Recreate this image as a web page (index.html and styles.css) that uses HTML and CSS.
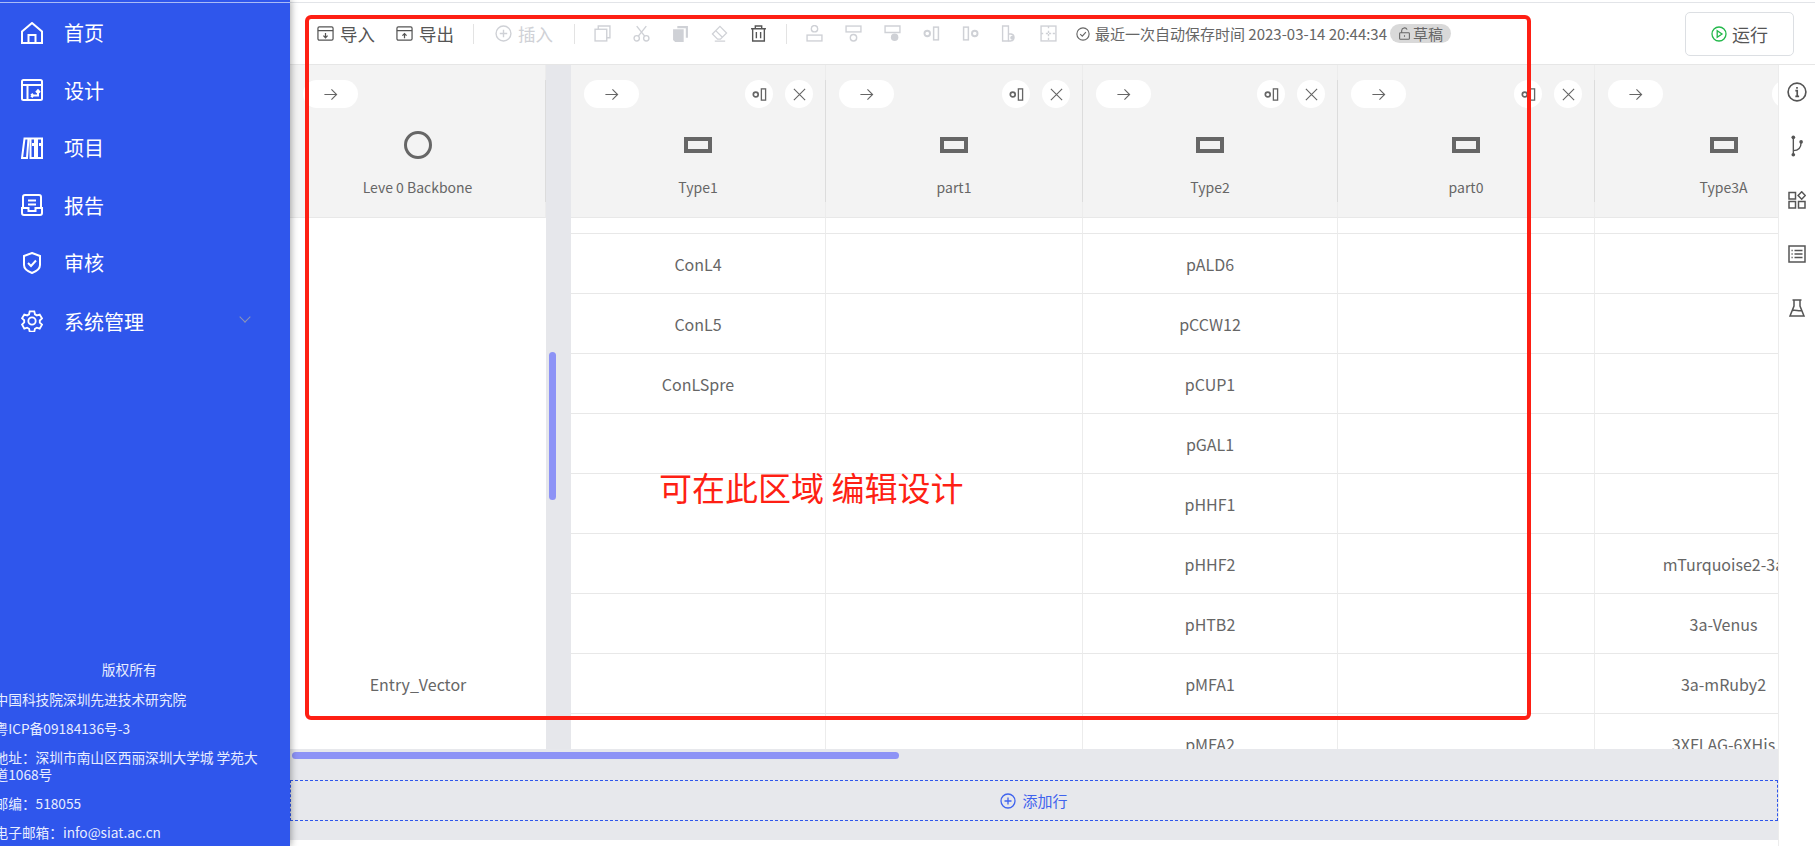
FILE: index.html
```html
<!DOCTYPE html>
<html>
  <head>
    <meta charset="utf-8">
    <title>设计</title>
    <link rel="stylesheet" href="styles.css">
  </head>
  <body>
    <!-- 图标 -->
    <svg class="sprite">
      <symbol id="i-arrow" viewBox="0 0 16 16"><path d="M1.5 8h13M9 2.5 14.5 8 9 13.5"/></symbol>
      <symbol id="i-close" viewBox="0 0 16 16"><path d="M2 2l12 12M14 2 2 14"/></symbol>
      <symbol id="i-ring-left" viewBox="0 0 16 16"><circle cx="4" cy="8" r="2.6" stroke-width="1.8"/><rect x="10" y="2" width="4.5" height="12" stroke-width="1.4"/></symbol>
      <symbol id="i-ring-right" viewBox="0 0 16 16"><circle cx="12" cy="8" r="2.6" stroke-width="1.8"/><rect x="1.5" y="2" width="4.5" height="12" stroke-width="1.4"/></symbol>
      <symbol id="i-import" viewBox="0 0 18 18"><rect x="1" y="2" width="16" height="14" rx="1.5"/><path d="M1 6h16M9 8.5v5M6.8 11.2 9 13.5l2.2-2.3"/></symbol>
      <symbol id="i-export" viewBox="0 0 18 18"><rect x="1" y="2" width="16" height="14" rx="1.5"/><path d="M1 6h16M9 14V9M6.8 11.2 9 9l2.2 2.2"/></symbol>
      <symbol id="i-plus-circle" viewBox="0 0 16 16"><circle cx="8" cy="8" r="7"/><path d="M8 4.5v7M4.5 8h7"/></symbol>
      <symbol id="i-copy" viewBox="0 0 16 16"><rect x="1" y="4" width="11" height="11"/><path d="M4 4V1h11v11h-3"/></symbol>
      <symbol id="i-cut" viewBox="0 0 16 16"><circle cx="3.5" cy="12.5" r="2.5"/><circle cx="12.5" cy="12.5" r="2.5"/><path d="M5 10.5 12.5 1M11 10.5 3.5 1"/></symbol>
      <symbol id="i-paste" viewBox="0 0 16 16"><path class="solid" d="M5 1h10v11h-2V3H5z"/><path class="solid" d="M1 4h10v12H3l-2-2z"/></symbol>
      <symbol id="i-eraser" viewBox="0 0 18 18"><path d="M1.5 9.5 9.5 1.5l7 7-6.5 6.5H7zM5 6l7 7M4 17h11"/></symbol>
      <symbol id="i-trash" viewBox="0 0 16 16"><path d="M1 3.5h14M5 3.5V1h6v2.5M2.5 3.5V15h11V3.5M6 6.5v6M10 6.5v6"/></symbol>
      <symbol id="i-row-up" viewBox="0 0 16 16"><circle cx="8" cy="3.5" r="3"/><rect x="1" y="9.5" width="14" height="5.5"/></symbol>
      <symbol id="i-row-down" viewBox="0 0 16 16"><rect x="1" y="1" width="14" height="5.5"/><circle cx="8" cy="12" r="3"/></symbol>
      <symbol id="i-row-fill" viewBox="0 0 16 16"><path d="M1 1h14v6H1z"/><circle class="solid" cx="10" cy="11.5" r="3.5"/></symbol>
      <symbol id="i-col-fill" viewBox="0 0 16 16"><path d="M1.5 1H7v14H1.500z"/><path d="M7 8.500h2.500a3.300 3.300 0 0 1 0 6.500H7"/><circle class="solid" cx="10.500" cy="12" r="1.800"/></symbol>
      <symbol id="i-merge" viewBox="0 0 16 16"><rect x="1" y="1" width="14" height="14"/><path d="M8 1v3M8 12v3M1 8h3M12 8h3M5.500 8h5M8 5.500v5" stroke-dasharray="2 1"/></symbol>
      <symbol id="i-check-circle" viewBox="0 0 16 16"><circle cx="8" cy="8" r="7"/><path d="M4.800 8.200 7.200 10.500 11.300 5.800"/></symbol>
      <symbol id="i-lock" viewBox="0 0 16 16"><rect x="2" y="7" width="12" height="8" rx="1"/><path d="M4.500 7V4.500a3.500 3.500 0 0 1 6.700-1.300M8 10v2"/></symbol>
      <symbol id="i-play" viewBox="0 0 16 16"><circle cx="8" cy="8" r="7"/><path d="M6.200 4.800v6.400L11 8z"/></symbol>
      <symbol id="i-info" viewBox="0 0 18 18"><circle cx="9" cy="9" r="8"/><path d="M7.500 7.800H9.200v5M7.500 13h3.400M9 4.500v1.600"/></symbol>
      <symbol id="i-branch" viewBox="0 0 14 24"><circle class="solid" cx="3" cy="2.500" r="2"/><circle class="solid" cx="3" cy="21.500" r="2"/><circle class="solid" cx="11.500" cy="7.500" r="2"/><path d="M3 3v18M3 17c5 0 8.500-3 8.500-9.500"/></symbol>
      <symbol id="i-shapes" viewBox="0 0 18 18"><rect x="1" y="1.500" width="6.500" height="6.500"/><rect x="1" y="10.500" width="6.500" height="6.500"/><rect x="10.500" y="10.500" width="6.500" height="6.500"/><path d="M13.700 0.800 17.300 4.500 13.700 8.200 10.100 4.500z"/></symbol>
      <symbol id="i-list" viewBox="0 0 18 18"><rect x="1" y="1" width="16" height="16"/><path d="M6.500 5.500h8M6.500 9h8M6.500 12.500h8M3.500 5.500h1.200M3.500 9h1.200M3.500 12.500h1.200"/></symbol>
      <symbol id="i-flask" viewBox="0 0 16 18"><path d="M3.500 1h9M5 1v6L1 17h14L11 7V1M3.200 11.500c3-1.200 6.500 1 9.600 0"/></symbol>
      <symbol id="i-home" viewBox="0 0 22 22"><path d="M1 9.500 11 1l10 8.500V21H1zM7.500 21v-8h7v8"/></symbol>
      <symbol id="i-design" viewBox="0 0 22 22"><rect x="1" y="1" width="20" height="20" rx="1.500"/><path d="M1 6h20M6.500 6v15M10 16.500h7v-5M15 13.500l2-2.200 2 2.200M10 16.500l2-1.800M10 16.500l2 1.800"/></symbol>
      <symbol id="i-books" viewBox="0 0 22 22"><path d="M3.500 1.500h4L6 21H1zM9.500 1.500h4.500V21H9.500zM16 1.500h5V21h-5zM12 6v3M19 6v3"/></symbol>
      <symbol id="i-report" viewBox="0 0 22 22"><path d="M2 13V3a2 2 0 0 1 2-2h14a2 2 0 0 1 2 2v10M1 14h6.500v3h7v-3H21v5a2 2 0 0 1-2 2H3a2 2 0 0 1-2-2zM7 6.500h8M7 10.500h8"/></symbol>
      <symbol id="i-shield" viewBox="0 0 22 22"><path d="M11 1l8 3v9c0 4-4 6.500-8 8-4-1.500-8-4-8-8V4zM7 11l3 3 5-5.500"/></symbol>
      <symbol id="i-gear" viewBox="0 0 24 24"><circle cx="12" cy="12" r="4"/><path d="M9.500 1.500h5l.7 3.200 2.100 1.200 3.100-1 2.500 4.300-2.400 2.200v2.400l2.400 2.200-2.500 4.300-3.100-1-2.100 1.200-.7 3.200h-5l-.7-3.200-2.100-1.200-3.100 1L1.100 15.800l2.400-2.200v-2.400L1.100 9 3.600 4.900l3.100 1 2.100-1.200z"/></symbol>
    </svg>

    <div class="page">
      <!-- 左侧菜单 -->
      <aside class="sidebar">
        <nav class="menu">
          <a class="menu-item"><svg class="menu-icon"><use href="#i-home"/></svg>首页</a>
          <a class="menu-item"><svg class="menu-icon"><use href="#i-design"/></svg>设计</a>
          <a class="menu-item"><svg class="menu-icon"><use href="#i-books"/></svg>项目</a>
          <a class="menu-item"><svg class="menu-icon"><use href="#i-report"/></svg>报告</a>
          <a class="menu-item"><svg class="menu-icon"><use href="#i-shield"/></svg>审核</a>
          <a class="menu-item menu-sub"><svg class="menu-icon"><use href="#i-gear"/></svg>系统管理<span class="menu-caret"></span></a>
        </nav>
        <footer class="copyright">
          <h4>版权所有</h4>
          <p>中国科技院深圳先进技术研究院</p>
          <p>粤ICP备09184136号-3</p>
          <p>地址：深圳市南山区西丽深圳大学城 学苑大道1068号</p>
          <p>邮编：518055</p>
          <p>电子邮箱：info@siat.ac.cn</p>
        </footer>
      </aside>

      <main class="main">
        <!-- 工具栏 -->
        <div class="toolbar">
          <a class="tool-text"><svg class="tool-icon"><use href="#i-import"/></svg>导入</a>
          <a class="tool-text"><svg class="tool-icon"><use href="#i-export"/></svg>导出</a>
          <span class="tool-sep"></span>
          <a class="tool-text off"><svg class="tool-icon"><use href="#i-plus-circle"/></svg>插入</a>
          <span class="tool-sep"></span>
          <a class="tool-btn off"><svg class="tool-icon"><use href="#i-copy"/></svg></a>
          <a class="tool-btn off"><svg class="tool-icon"><use href="#i-cut"/></svg></a>
          <a class="tool-btn off"><svg class="tool-icon"><use href="#i-paste"/></svg></a>
          <a class="tool-btn off"><svg class="tool-icon"><use href="#i-eraser"/></svg></a>
          <a class="tool-btn"><svg class="tool-icon"><use href="#i-trash"/></svg></a>
          <span class="tool-sep"></span>
          <a class="tool-btn off"><svg class="tool-icon"><use href="#i-row-up"/></svg></a>
          <a class="tool-btn off"><svg class="tool-icon"><use href="#i-row-down"/></svg></a>
          <a class="tool-btn off"><svg class="tool-icon"><use href="#i-row-fill"/></svg></a>
          <a class="tool-btn off"><svg class="tool-icon"><use href="#i-ring-left"/></svg></a>
          <a class="tool-btn off"><svg class="tool-icon"><use href="#i-ring-right"/></svg></a>
          <a class="tool-btn off"><svg class="tool-icon"><use href="#i-col-fill"/></svg></a>
          <a class="tool-btn off"><svg class="tool-icon"><use href="#i-merge"/></svg></a>
          <div class="save-info">
            <svg class="save-icon"><use href="#i-check-circle"/></svg>
            <span>最近一次自动保存时间 2023-03-14 20:44:34</span>
            <span class="badge"><svg class="badge-icon"><use href="#i-lock"/></svg>草稿</span>
          </div>
          <button class="run-btn" type="button"><svg class="run-icon"><use href="#i-play"/></svg>运行</button>
        </div>

        <div class="workspace">
          <div class="board">
            <div class="sheet">
              <!-- 固定列 -->
              <div class="fixed-col">
                <div class="col-head">
                  <div class="col-actions"><span class="pill"><svg class="btn-icon"><use href="#i-arrow"/></svg></span></div>
                  <span class="shape-circle"></span>
                  <div class="col-label">Leve 0 Backbone</div>
                </div>
                <div class="fixed-body">Entry_Vector</div>
              </div>
              <div class="v-track"><span class="v-thumb"></span></div>

              <!-- 可滚动的列 -->
              <div class="cols">
                <div class="head-row">
                  <div class="col-head">
                    <div class="col-actions">
                      <span class="pill"><svg class="btn-icon"><use href="#i-arrow"/></svg></span>
                      <span class="round first"><svg class="btn-icon"><use href="#i-ring-left"/></svg></span>
                      <span class="round"><svg class="btn-icon"><use href="#i-close"/></svg></span>
                    </div>
                    <span class="shape-rect"></span>
                    <div class="col-label">Type1</div>
                  </div>
                  <div class="col-head">
                    <div class="col-actions">
                      <span class="pill"><svg class="btn-icon"><use href="#i-arrow"/></svg></span>
                      <span class="round first"><svg class="btn-icon"><use href="#i-ring-left"/></svg></span>
                      <span class="round"><svg class="btn-icon"><use href="#i-close"/></svg></span>
                    </div>
                    <span class="shape-rect"></span>
                    <div class="col-label">part1</div>
                  </div>
                  <div class="col-head">
                    <div class="col-actions">
                      <span class="pill"><svg class="btn-icon"><use href="#i-arrow"/></svg></span>
                      <span class="round first"><svg class="btn-icon"><use href="#i-ring-left"/></svg></span>
                      <span class="round"><svg class="btn-icon"><use href="#i-close"/></svg></span>
                    </div>
                    <span class="shape-rect"></span>
                    <div class="col-label">Type2</div>
                  </div>
                  <div class="col-head">
                    <div class="col-actions">
                      <span class="pill"><svg class="btn-icon"><use href="#i-arrow"/></svg></span>
                      <span class="round first"><svg class="btn-icon"><use href="#i-ring-left"/></svg></span>
                      <span class="round"><svg class="btn-icon"><use href="#i-close"/></svg></span>
                    </div>
                    <span class="shape-rect"></span>
                    <div class="col-label">part0</div>
                  </div>
                  <div class="col-head">
                    <div class="col-actions">
                      <span class="pill"><svg class="btn-icon"><use href="#i-arrow"/></svg></span>
                      <span class="round first"><svg class="btn-icon"><use href="#i-ring-left"/></svg></span>
                      <span class="round"><svg class="btn-icon"><use href="#i-close"/></svg></span>
                    </div>
                    <span class="shape-rect"></span>
                    <div class="col-label">Type3A</div>
                  </div>
                </div>

                <div class="row stub"><div></div><div></div><div></div><div></div><div></div></div>
                <div class="row"><div>ConL4</div><div></div><div>pALD6</div><div></div><div></div></div>
                <div class="row"><div>ConL5</div><div></div><div>pCCW12</div><div></div><div></div></div>
                <div class="row"><div>ConLSpre</div><div></div><div>pCUP1</div><div></div><div></div></div>
                <div class="row"><div></div><div></div><div>pGAL1</div><div></div><div></div></div>
                <div class="row"><div></div><div></div><div>pHHF1</div><div></div><div></div></div>
                <div class="row"><div></div><div></div><div>pHHF2</div><div></div><div>mTurquoise2-3a</div></div>
                <div class="row"><div></div><div></div><div>pHTB2</div><div></div><div>3a-Venus</div></div>
                <div class="row"><div></div><div></div><div>pMFA1</div><div></div><div>3a-mRuby2</div></div>
                <div class="row"><div></div><div></div><div>pMFA2</div><div></div><div>3XFLAG-6XHis</div></div>
              </div>
            </div>

            <div class="h-track">
              <span class="h-thumb"></span>
              <div class="add-row"><svg class="add-icon"><use href="#i-plus-circle"/></svg>添加行</div>
            </div>
          </div>

          <!-- 右侧图标栏 -->
          <div class="rail">
            <svg class="rail-icon wide"><use href="#i-info"/></svg>
            <svg class="rail-icon tall"><use href="#i-branch"/></svg>
            <svg class="rail-icon"><use href="#i-shapes"/></svg>
            <svg class="rail-icon"><use href="#i-list"/></svg>
            <svg class="rail-icon"><use href="#i-flask"/></svg>
          </div>
        </div>
      </main>

      <!-- 截图上的红色标注 -->
      <div class="note-box"></div>
      <div class="note-text">可在此区域 编辑设计</div>
    </div>
  </body>
</html>
```

FILE: styles.css
```css
* {
  box-sizing: border-box;
}

html, body {
  margin: 0;
  height: 100%;
  overflow: hidden;
}

body {
  font-family: "Noto Sans CJK SC", "Noto Sans", sans-serif;
  color: #666;
  background: #fff;
}

.sprite {
  display: none;
}

svg {
  fill: none;
  stroke: currentColor;
  stroke-width: 1.3;
}

svg .solid {
  fill: currentColor;
  stroke: none;
}

.page {
  position: relative;
  display: flex;
  height: 846px;
}

/* 左侧菜单 */
.sidebar {
  position: relative;
  z-index: 2;
  flex: 0 0 290px;
  width: 290px;
  display: flex;
  flex-direction: column;
  overflow: hidden;
  padding-top: 2px;
  color: #fff;
  background: #2f56ec;
  box-shadow: 1px 0 7px rgba(0, 0, 0, 0.35);
}

.menu {
  border-top: 1px solid #a9bbf7;
  padding-top: 1px;
}

.menu-item {
  display: flex;
  align-items: center;
  height: 57.5px;
  padding-left: 21px;
  font-size: 20px;
}

.menu-sub {
  margin-top: 1px;
}

.menu-icon {
  width: 22px;
  height: 22px;
  margin-right: 21px;
  stroke-width: 2;
}

.menu-caret {
  width: 8px;
  height: 8px;
  margin: -8px 0 0 97px;
  border-right: 1px solid #8c94b8;
  border-bottom: 1px solid #8c94b8;
  transform: rotate(45deg);
}

.copyright {
  margin: auto 26px 0 -5.5px;
  padding-bottom: 5.5px;
  font-size: 13.7px;
  line-height: 17px;
  color: #e8edff;
}

.copyright h4 {
  margin: 0 0 13px;
  font-size: 13.7px;
  font-weight: 400;
  text-align: center;
}

.copyright p {
  margin: 0 0 12px;
}

.copyright p:last-child {
  margin-bottom: 0;
}

/* 工具栏 */
.main {
  flex: 1;
  min-width: 0;
  display: flex;
  flex-direction: column;
  margin-top: 2px;
  border-top: 1px solid #e2e4e8;
}

.toolbar {
  flex: 0 0 62px;
  display: flex;
  align-items: center;
  padding: 0 21px 0 27px;
  border-bottom: 1px solid #e6e6e6;
}

.tool-text {
  display: flex;
  align-items: center;
  margin-right: 21px;
  font-size: 17.5px;
  color: #555;
}

.tool-text.off {
  margin-right: 23px;
}

.tool-text .tool-icon {
  margin-right: 6px;
}

.tool-icon {
  width: 17px;
  height: 17px;
}

.tool-btn {
  display: flex;
  justify-content: center;
  width: 39px;
  color: #555;
}

.toolbar .off {
  color: #cfd1d6;
}

.tool-sep {
  width: 1px;
  height: 20px;
  margin-right: 8px;
  background: #e3e3e3;
}

.tool-text + .tool-sep {
  margin-left: -2px;
}

.tool-btn + .tool-sep {
  margin-left: 8px;
}

.tool-sep + .tool-text {
  margin-left: 13px;
}

.save-info {
  display: flex;
  align-items: center;
  margin-left: 8px;
  font-size: 15px;
  color: #666;
}

.save-icon {
  width: 14px;
  height: 14px;
  margin-right: 5px;
}

.badge {
  display: flex;
  align-items: center;
  height: 19px;
  margin-left: 3px;
  padding: 0 8px;
  border-radius: 10px;
  background: #d9d9d9;
}

.badge-icon {
  width: 13px;
  height: 13px;
  margin-right: 2px;
}

.run-btn {
  display: flex;
  align-items: center;
  justify-content: center;
  width: 109px;
  height: 44px;
  margin-left: auto;
  border: 1px solid #dcdfe3;
  border-radius: 5px;
  background: #fff;
  font: inherit;
  font-size: 18px;
  color: #555;
}

.run-icon {
  width: 16px;
  height: 16px;
  margin-right: 5px;
  color: #22b84a;
}

/* 表格 */
.workspace {
  flex: 1;
  display: flex;
  min-height: 0;
}

.board {
  flex: 0 0 1488px;
  min-width: 0;
}

.sheet {
  display: flex;
  height: 684px;
}

.fixed-col {
  flex: 0 0 256px;
  display: flex;
  flex-direction: column;
}

.fixed-body {
  flex: 1;
  padding-top: 454px;
  text-align: center;
  font-size: 16px;
  line-height: 24px;
}

.v-track {
  flex: 0 0 25px;
  padding: 287px 0 0 3px;
  background: #e6e7eb;
}

.v-thumb {
  display: block;
  width: 7px;
  height: 148px;
  border-radius: 4px;
  background: #8d93f6;
}

.cols {
  --cols: 255px 257px 255px 257px 258px;
  flex: 1;
  min-width: 0;
  overflow: hidden;
}

.head-row,
.row {
  display: grid;
  grid-template-columns: var(--cols);
}

.col-head {
  position: relative;
  display: flex;
  flex-direction: column;
  align-items: center;
  flex: 0 0 153px;
  height: 153px;
  background: #f3f3f3;
  border-bottom: 1px solid #e8e8e8;
  border-right: 1px solid #ececec;
}

/* 表头里较深的竖线 */
.col-head::after {
  content: "";
  position: absolute;
  top: 15px;
  right: -1px;
  bottom: 15px;
  width: 1px;
  background: #dcdcdc;
}

.col-actions {
  display: flex;
  align-self: stretch;
  gap: 12px;
  height: 28px;
  margin-top: 15px;
  padding: 0 12px 0 13px;
}

.pill,
.round {
  display: flex;
  align-items: center;
  justify-content: center;
  height: 28px;
  background: #fff;
  border-radius: 14px;
}

.pill {
  width: 55px;
}

.round {
  width: 28px;
}

.round.first {
  margin-left: auto;
}

.btn-icon {
  width: 15px;
  height: 15px;
  stroke-width: 1.2;
}

.shape-rect {
  width: 28px;
  height: 16px;
  margin-top: 29px;
  border: 4px solid #666;
}

.shape-circle {
  width: 28px;
  height: 28px;
  margin-top: 23px;
  border: 3px solid #666;
  border-radius: 50%;
}

.shape-circle + .col-label {
  margin-top: 18px;
}

.col-label {
  margin-top: 24px;
  font-size: 14px;
  line-height: 20px;
}

.row > div {
  display: flex;
  align-items: center;
  justify-content: center;
  height: 60px;
  border-right: 1px solid #ececec;
  border-bottom: 1px solid #e8e8e8;
  font-size: 16px;
  white-space: nowrap;
  overflow: hidden;
}

.row.stub > div {
  height: 16px;
}

.h-track {
  position: relative;
  height: 91px;
  padding-top: 31px;
  background: #e7e8ec;
}

.h-thumb {
  position: absolute;
  top: 3px;
  left: 2px;
  width: 607px;
  height: 7px;
  border-radius: 4px;
  background: #8d93f6;
}

.add-row {
  display: flex;
  align-items: center;
  justify-content: center;
  height: 41px;
  border: 1px dashed #2f56ec;
  font-size: 15px;
  color: #3f63ee;
}

.add-icon {
  width: 16px;
  height: 16px;
  margin-right: 6px;
}

/* 右侧图标栏 */
.rail {
  flex: 1;
  display: flex;
  flex-direction: column;
  align-items: center;
  gap: 36px;
  padding-top: 18px;
  border-left: 1px solid #ececec;
  color: #555;
}

.rail-icon {
  flex: none;
  width: 18px;
  height: 18px;
  stroke-width: 1.5;
}

.rail-icon.wide {
  width: 20px;
  height: 20px;
  margin: -1px 0;
}

.rail-icon.tall {
  height: 22px;
  margin: -2px 0;
}

/* 红色标注 */
.note-box {
  position: absolute;
  z-index: 3;
  left: 305px;
  top: 15px;
  width: 1226px;
  height: 705px;
  border: 4px solid #fe1f14;
  border-radius: 6px;
}

.note-text {
  position: absolute;
  z-index: 3;
  left: 659px;
  top: 465px;
  font-size: 33px;
  line-height: 44px;
  color: #fe1f14;
  white-space: nowrap;
}
```
